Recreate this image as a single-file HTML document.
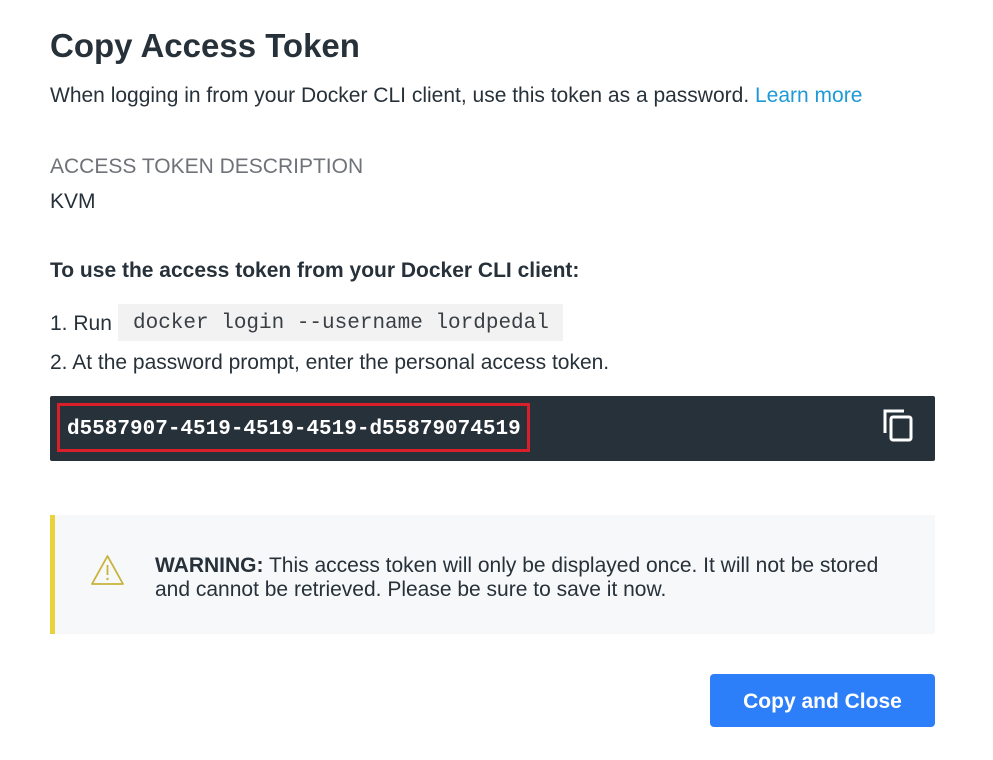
<!DOCTYPE html>
<html><head><style>
body{margin:0;width:993px;height:760px;background:#fff;font-family:"Liberation Sans",Arial,sans-serif;color:#27313a;position:relative;overflow:hidden}
.a{position:absolute;white-space:nowrap}
</style></head><body>
<div class="a" style="left:50px;top:27px;font-size:33px;font-weight:bold">Copy Access Token</div>
<div class="a" style="left:50px;top:84px;font-size:21px">When logging in from your Docker CLI client, use this token as a password. <span style="color:#1d9ad6">Learn more</span></div>
<div class="a" style="left:50px;top:155px;font-size:21px;color:#6f7378">ACCESS TOKEN DESCRIPTION</div>
<div class="a" style="left:50px;top:190px;font-size:21px">KVM</div>
<div class="a" style="left:50px;top:259px;font-size:21px;font-weight:bold">To use the access token from your Docker CLI client:</div>
<div class="a" style="left:50px;top:312px;font-size:21px">1. Run</div>
<div class="a" style="left:118px;top:304px;width:445px;height:37px;background:#f2f2f2;font-family:'Liberation Mono',monospace;font-size:21px;line-height:39px;text-indent:15px;color:#3a3f44">docker login --username lordpedal</div>
<div class="a" style="left:50px;top:351px;font-size:21px">2. At the password prompt, enter the personal access token.</div>
<div class="a" style="left:50px;top:396px;width:885px;height:65px;background:#27313a;border-radius:2px"></div>
<div class="a" style="left:57px;top:403px;width:467px;height:43px;border:3px solid #d9202a"></div>
<div class="a" style="left:67px;top:418px;font-family:'Liberation Mono',monospace;font-weight:bold;font-size:21px;color:#fff">d5587907-4519-4519-4519-d55879074519</div>
<svg class="a" style="left:882px;top:408px" width="34" height="36" viewBox="0 0 34 36"><path d="M3 25V3h19" fill="none" stroke="#fff" stroke-width="3"/><rect x="9" y="9" width="20" height="23" rx="2" fill="none" stroke="#fff" stroke-width="3"/></svg>
<div class="a" style="left:50px;top:515px;width:880px;height:119px;background:#f7f8f9;border-left:5px solid #e8d43a"></div>
<svg class="a" style="left:90px;top:554px" width="35" height="32" viewBox="0 0 35 32"><path d="M17.5 2L33 30H2Z" fill="none" stroke="#c9b23a" stroke-width="1.8" stroke-linejoin="round"/><path d="M17.5 11v10" stroke="#c9b23a" stroke-width="1.8"/><circle cx="17.5" cy="25" r="1.2" fill="#c9b23a"/></svg>
<div class="a" style="left:155px;top:554px;font-size:21px;line-height:24px">
<b>WARNING:</b> This access token will only be displayed once. It will not be stored<br>and cannot be retrieved. Please be sure to save it now.</div>
<div class="a" style="left:710px;top:674px;width:225px;height:53px;background:#2d7ff9;border-radius:4px;color:#fff;font-weight:bold;font-size:21px;line-height:55px;text-align:center">Copy and Close</div>
</body></html>
